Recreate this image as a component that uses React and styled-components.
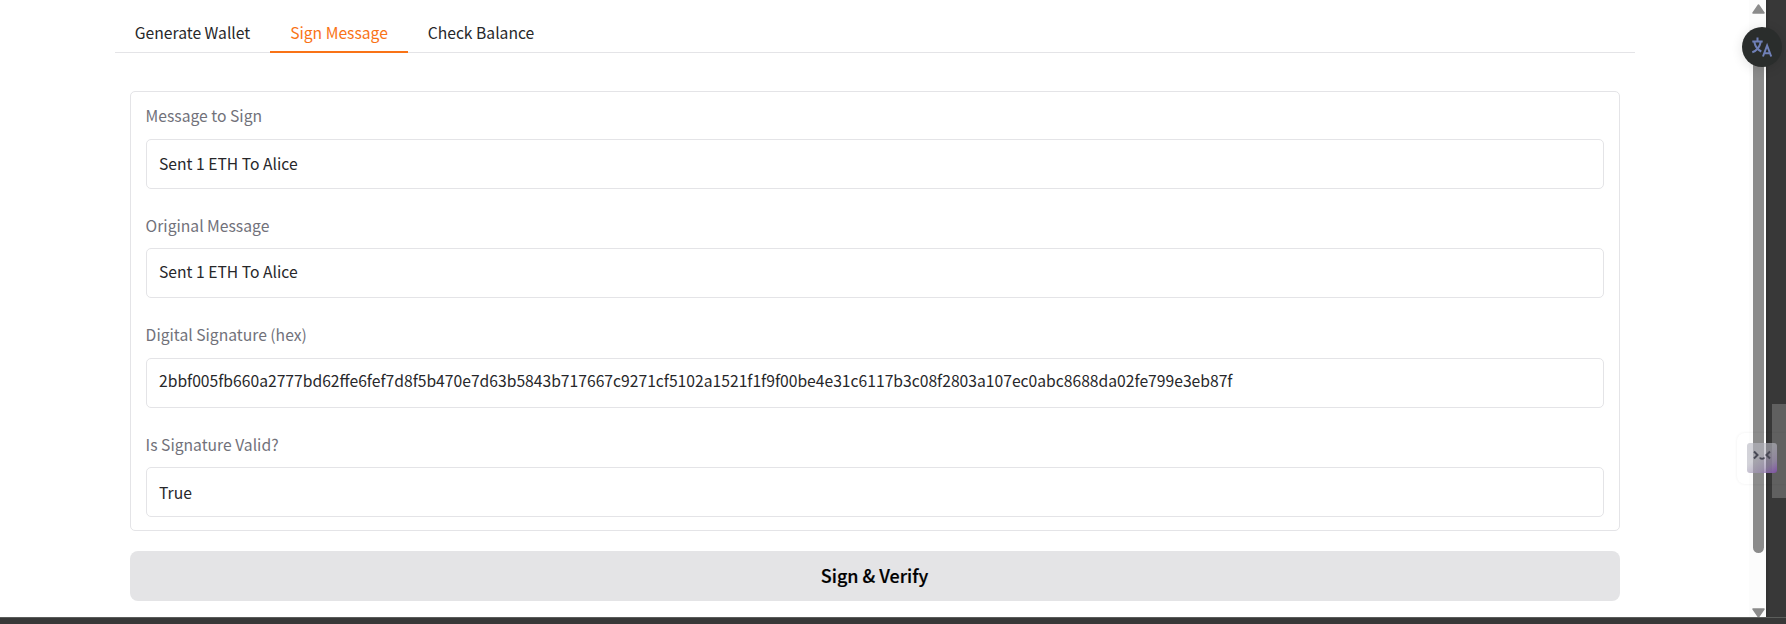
import React from "react";
import styled, { createGlobalStyle } from "styled-components";

const GlobalStyle = createGlobalStyle`
  * { box-sizing: border-box; }
  body {
    margin: 0;
    overflow: hidden;
    background: #383838;
    font-family: "Noto Sans CJK SC", "Noto Sans", sans-serif;
    font-size: 15.685px;
    color: #27272a;
  }
`;

const Screen = styled.div`
  height: 624px;
  display: flex;
  flex-direction: column;
  position: relative;
`;

const Viewport = styled.div`
  height: 617px;
  display: flex;
  overflow: hidden;
`;

const Page = styled.main`
  width: 1749px;
  background: #fff;
  padding: 0 114px 0 115px;
`;

const Tabs = styled.nav`
  display: flex;
  height: 53px;
  background: linear-gradient(#e4e4e7, #e4e4e7) bottom / 100% 1px no-repeat;
`;

const Tab = styled.button`
  width: ${(p) => p.$width}px;
  height: 53px;
  padding: 14px 0 0;
  border: 0;
  border-bottom: 2px solid ${(p) => (p.$active ? "#f97316" : "transparent")};
  background: none;
  color: ${(p) => (p.$active ? "#f97316" : "#27272a")};
  font: inherit;
  line-height: 37px;
  white-space: nowrap;
`;

const Panel = styled.section`
  padding: 38px 15px 0;
`;

const Card = styled.div`
  border: 1px solid #e4e4e7;
  border-radius: 5px;
  padding: 0 15px 13px;
`;

const Label = styled.label`
  display: flex;
  align-items: flex-end;
  height: ${(p) => p.$height}px;
  margin-left: -0.4px;
  padding-bottom: ${(p) => p.$gap}px;
  line-height: 24px;
  color: #71717a;
`;

const Input = styled.div`
  height: 50px;
  border: 1px solid #e4e4e7;
  border-radius: 5px;
  padding: ${(p) => p.$top}px 12px 0;
  line-height: 24px;
  white-space: nowrap;
`;

const SubmitButton = styled.button`
  display: block;
  width: 100%;
  height: 50px;
  margin-top: 20px;
  padding: 0 1px 2px 0;
  border: 0;
  border-radius: 8px;
  background: #e4e4e6;
  color: #000;
  font: inherit;
  font-size: 17.95px;
  font-weight: 500;
  -webkit-text-stroke: 0.2px #000;
  line-height: 48px;
`;

const ScrollTrack = styled.div`
  width: 17px;
  background: #fcfcfc;
  display: flex;
  flex-direction: column;
  align-items: center;
  padding: 4px 0 0 2px;
`;

const ScrollThumb = styled.div`
  width: 11px;
  height: 514px;
  margin: 26px 0 54px;
  border-radius: 6px;
  background: #8b8b8b;
`;

const Arrow = styled.svg`
  display: block;
  flex: none;
`;

const Desktop = styled.div`
  width: 20px;
  background: linear-gradient(90deg, #303030, #383838 4px);
  display: flex;
  justify-content: flex-end;
  padding-top: 404px;
`;

const OuterThumb = styled.div`
  width: 14px;
  height: 94px;
  background: #606060;
`;

const BottomEdge = styled.div`
  height: 7px;
  background: #383838;
  border-top: 1px solid #5b5d5b;
`;

const TranslateBadge = styled.div`
  position: absolute;
  left: 1742px;
  top: 27px;
  width: 40px;
  height: 40px;
  border-radius: 50%;
  background: #2a2d2c;
  box-shadow: 0 2px 12px rgba(0, 0, 0, 0.12);
`;

const AssistantTray = styled.div`
  position: absolute;
  left: 1737px;
  top: 433px;
  width: 49px;
  height: 51px;
  padding: 10px;
  border-radius: 8px 0 0 8px;
  box-shadow: 0 0 3px rgba(0, 0, 0, 0.07);
`;

const AssistantIcon = styled.svg`
  display: block;
`;

const fields = [
  { label: "Message to Sign", value: "Sent 1 ETH To Alice", height: 47, gap: 11, top: 12 },
  { label: "Original Message", value: "Sent 1 ETH To Alice", height: 59, gap: 10, top: 11 },
  {
    label: "Digital Signature (hex)",
    value:
      "2bbf005fb660a2777bd62ffe6fef7d8f5b470e7d63b5843b717667c9271cf5102a1521f1f9f00be4e31c6117b3c08f2803a107ec0abc8688da02fe799e3eb87f",
    height: 60,
    gap: 11,
    top: 10,
  },
  { label: "Is Signature Valid?", value: "True", height: 59, gap: 10, top: 13 },
];

export default function App() {
  return (
    <>
      <GlobalStyle />
      <Screen>
        <Viewport>
          <Page>
            <Tabs>
              <Tab $width={155}>Generate Wallet</Tab>
              <Tab $width={138} $active>Sign Message</Tab>
              <Tab $width={146}>Check Balance</Tab>
            </Tabs>
            <Panel>
              <Card>
                {fields.map((f) => (
                  <React.Fragment key={f.label}>
                    <Label $height={f.height} $gap={f.gap}>{f.label}</Label>
                    <Input $top={f.top}>{f.value}</Input>
                  </React.Fragment>
                ))}
              </Card>
              <SubmitButton>Sign &amp; Verify</SubmitButton>
            </Panel>
          </Page>
          <ScrollTrack>
            <Arrow width="13" height="10" viewBox="0 0 13 10">
              <path d="M6.5 1 12 9H1Z" fill="#8b8b8b" stroke="#8b8b8b" strokeWidth="1.5" strokeLinejoin="round" />
            </Arrow>
            <ScrollThumb />
            <Arrow width="13" height="10" viewBox="0 0 13 10">
              <path d="M6.5 10 12 2H1Z" fill="#8b8b8b" stroke="#8b8b8b" strokeWidth="1.5" strokeLinejoin="round" />
            </Arrow>
          </ScrollTrack>
          <Desktop>
            <OuterThumb />
          </Desktop>
        </Viewport>
        <BottomEdge />
        <TranslateBadge>
          <svg width="40" height="40" viewBox="0 0 40 40" fill="none" stroke="#7080b8" strokeWidth="2">
            <path d="M15.500 10.500v4M10.300 14.500H20.700M12.300 15c1 4.800 4 8 7 9.500M18.700 15c-1 5-4 8.700-8.400 10.200" />
            <path d="M21 29.500 25.100 18.500 29.200 29.500M22.500 26.300h5.400" />
          </svg>
        </TranslateBadge>
        <AssistantTray>
          <AssistantIcon width="30" height="30" viewBox="0 0 30 30">
            <defs>
              <linearGradient id="glow" x1="0.25" y1="0" x2="1" y2="1">
                <stop offset="0.35" stopColor="#b8b8c2" stopOpacity="0.62" />
                <stop offset="0.7" stopColor="#a092b4" stopOpacity="0.72" />
                <stop offset="1" stopColor="#7d4ba8" stopOpacity="0.95" />
              </linearGradient>
            </defs>
            <rect width="30" height="30" rx="3" fill="url(#glow)" />
            <path d="M7 8.500 10.500 12 7 15.500M23 8.500 19.500 12 23 15.500M13 14.500c.5 1.600 3.700 1.600 4.200 0" fill="none" stroke="#484955" strokeWidth="2" />
          </AssistantIcon>
        </AssistantTray>
      </Screen>
    </>
  );
}
